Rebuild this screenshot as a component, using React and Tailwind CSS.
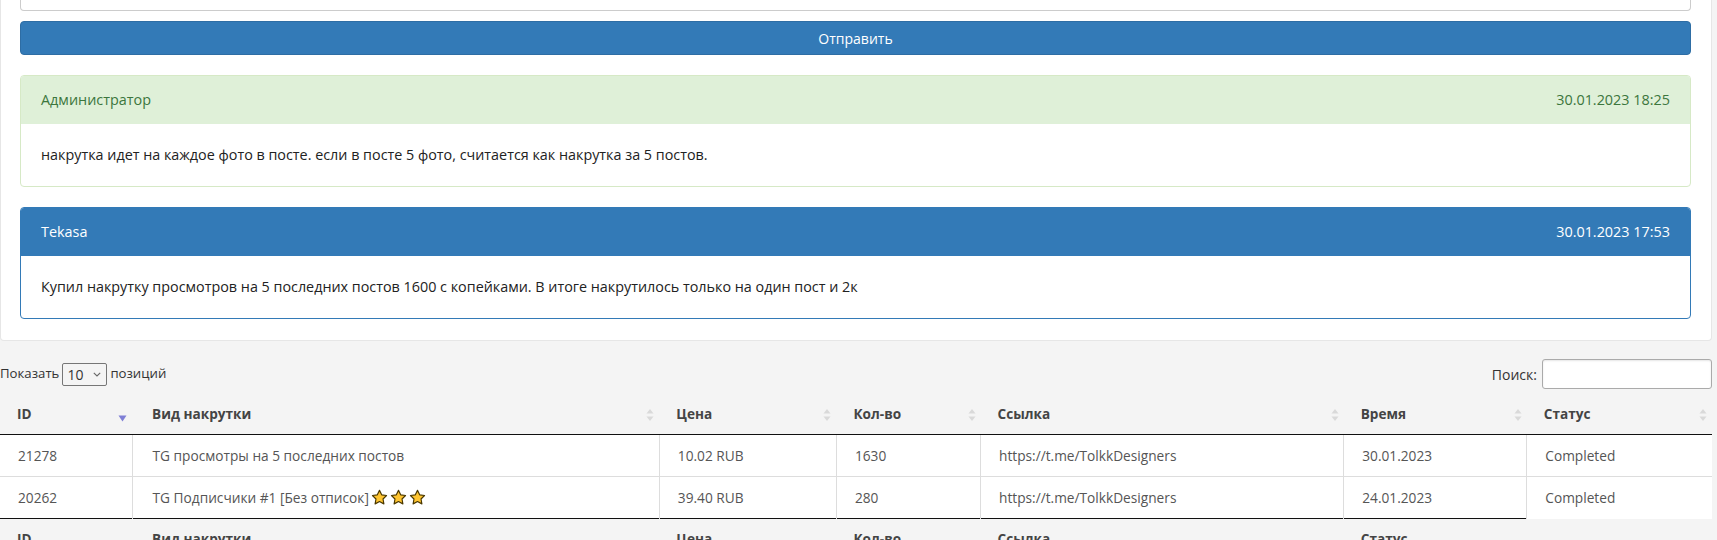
import React from "react";

const Star = () => (
  <svg width="17" height="17" viewBox="0 0 16 16" className="inline-block align-[-3px] mr-[2px]">
    <path
      d="M8 1.3l2.05 4.2 4.6.65-3.33 3.25.8 4.6L8 11.8l-4.12 2.2.8-4.6L1.35 6.15l4.6-.65z"
      fill="#ffc531"
      stroke="#4a3800"
      strokeWidth="1.1"
      strokeLinejoin="round"
    />
  </svg>
);

const SortBoth = () => (
  <svg width="8" height="14" viewBox="0 0 8 14" className="absolute right-[5px] top-[14px]">
    <path d="M4 1L7.5 5.5H0.5z" fill="#d9d9d9" />
    <path d="M4 13L7.5 8.5H0.5z" fill="#d9d9d9" />
  </svg>
);

const SortDesc = () => (
  <svg width="9" height="7" viewBox="0 0 9 7" className="absolute right-[5px] top-[21px]">
    <path d="M4.5 6.5L8.5 0.5H0.5z" fill="#7f7fd5" />
  </svg>
);

const cols = ["ID", "Вид накрутки", "Цена", "Кол-во", "Ссылка", "Время", "Статус"];
const footCols = ["ID", "Вид накрутки", "Цена", "Кол-во", "Ссылка", "Статус"];
const widths = [132, 527, 177, 144, 363, 183, 185];

const rows = [
  { id: "21278", kind: "TG просмотры на 5 последних постов", stars: false, price: "10.02 RUB", qty: "1630", link: "https://t.me/TolkkDesigners", time: "30.01.2023", status: "Completed" },
  { id: "20262", kind: "TG Подписчики #1 [Без отписок]", stars: true, price: "39.40 RUB", qty: "280", link: "https://t.me/TolkkDesigners", time: "24.01.2023", status: "Completed" },
];

const Panel = ({ kind, name, date, text }) => {
  const success = kind === "success";
  return (
    <div className={`mt-5 rounded-[4px] border overflow-hidden ${success ? "border-[#d6e9c6]" : "border-[#337ab7]"}`}>
      <div className={`h-[48px] px-[20px] flex items-center justify-between text-[14.4px] ${success ? "bg-[#dff0d8] text-[#3c763d]" : "bg-[#337ab7] text-white"}`}>
        <span>{name}</span>
        <span>{date}</span>
      </div>
      <div className="px-[20px] py-[20px] leading-[22px] text-[14.35px] text-[#222]">{text}</div>
    </div>
  );
};

export default function App() {
  return (
    <div className="w-[1717px] h-[540px] overflow-hidden bg-[#f4f4f4] font-['Open_Sans',sans-serif] text-[14px] text-[#333]">
      <div className="w-[1712px]">
        {/* form + comments */}
        <div className="bg-white rounded-b-[4px] border border-t-0 border-[#e6e6e6] pl-[19px] pr-[20px] pb-[21px]">
          <div className="h-[11px] border border-t-0 border-[#cccccc] rounded-b-[4px]" />
          <button className="mt-[10px] w-full h-[34px] rounded-[4px] bg-[#337ab7] border border-[#2e6da4] text-white text-[14px]">
            Отправить
          </button>
          <Panel
            kind="success"
            name="Администратор"
            date="30.01.2023 18:25"
            text="накрутка идет на каждое фото в посте. если в посте 5 фото, считается как накрутка за 5 постов."
          />
          <Panel
            kind="primary"
            name="Tekasa"
            date="30.01.2023 17:53"
            text="Купил накрутку просмотров на 5 последних постов 1600 с копейками. В итоге накрутилось только на один пост и 2к"
          />
        </div>

        {/* orders table */}
        <div className="pt-[18px]">
          <div className="flex items-center justify-between h-[30px]">
            <div className="flex items-center gap-[3px] text-[13.2px] text-[#333]">
              <span>Показать</span>
              <div className="w-[45px] h-[23px] border border-[#767676] rounded-[2px] flex items-center justify-between pl-[4px] pr-[5px] text-[14px]">
                <span>10</span>
                <svg width="8" height="5" viewBox="0 0 8 5">
                  <path d="M0.8 0.8L4 4L7.2 0.8" fill="none" stroke="#666" strokeWidth="1.1" />
                </svg>
              </div>
              <span>позиций</span>
            </div>
            <div className="flex items-center gap-[5px]">
              <span>Поиск:</span>
              <div className="w-[170px] h-[30px] bg-white border border-[#aaaaaa] rounded-[3px] shadow-[inset_0_1px_2px_rgba(0,0,0,0.1)]" />
            </div>
          </div>

          <table className="mt-[5px] border-collapse table-fixed w-[1712px]">
            <colgroup>
              {widths.map((w, i) => (
                <col key={i} style={{ width: w }} />
              ))}
            </colgroup>
            <thead>
              <tr>
                {cols.map((c, i) => (
                  <th
                    key={c}
                    className={`relative text-left font-bold text-[13.6px] text-[#444] ${i === 1 ? "pl-[20px]" : "pl-[17px]"} py-[10px] leading-[20px] border-b border-[#111]`}
                  >
                    {c}
                    {i === 0 ? <SortDesc /> : <SortBoth />}
                  </th>
                ))}
              </tr>
            </thead>
            <tbody>
              {rows.map((r, ri) => (
                <tr key={r.id} className="bg-white text-[#555] text-[13.7px]">
                  {[r.id, r.kind, r.price, r.qty, r.link, r.time, r.status].map((v, i) => (
                    <td
                      key={i}
                      className={`${i === 1 ? "pl-[20px]" : "pl-[18px]"} py-[10px] leading-[21px] ${i > 0 ? "border-l border-[#dddddd]" : ""} ${ri === 0 ? "border-b border-[#dddddd]" : ""}`}
                    >
                      {v}
                      {i === 1 && r.stars && (
                        <span className="ml-[2px]">
                          <Star />
                          <Star />
                          <Star />
                        </span>
                      )}
                    </td>
                  ))}
                </tr>
              ))}
            </tbody>
            <tfoot>
              <tr>
                {footCols.map((c, i) => (
                  <th
                    key={c}
                    className={`text-left font-bold text-[13.6px] text-[#444] ${i === 1 ? "pl-[20px]" : "pl-[17px]"} py-[10px] leading-[20px] border-t border-[#111]`}
                  >
                    {c}
                  </th>
                ))}
              </tr>
            </tfoot>
          </table>
        </div>
      </div>
    </div>
  );
}
